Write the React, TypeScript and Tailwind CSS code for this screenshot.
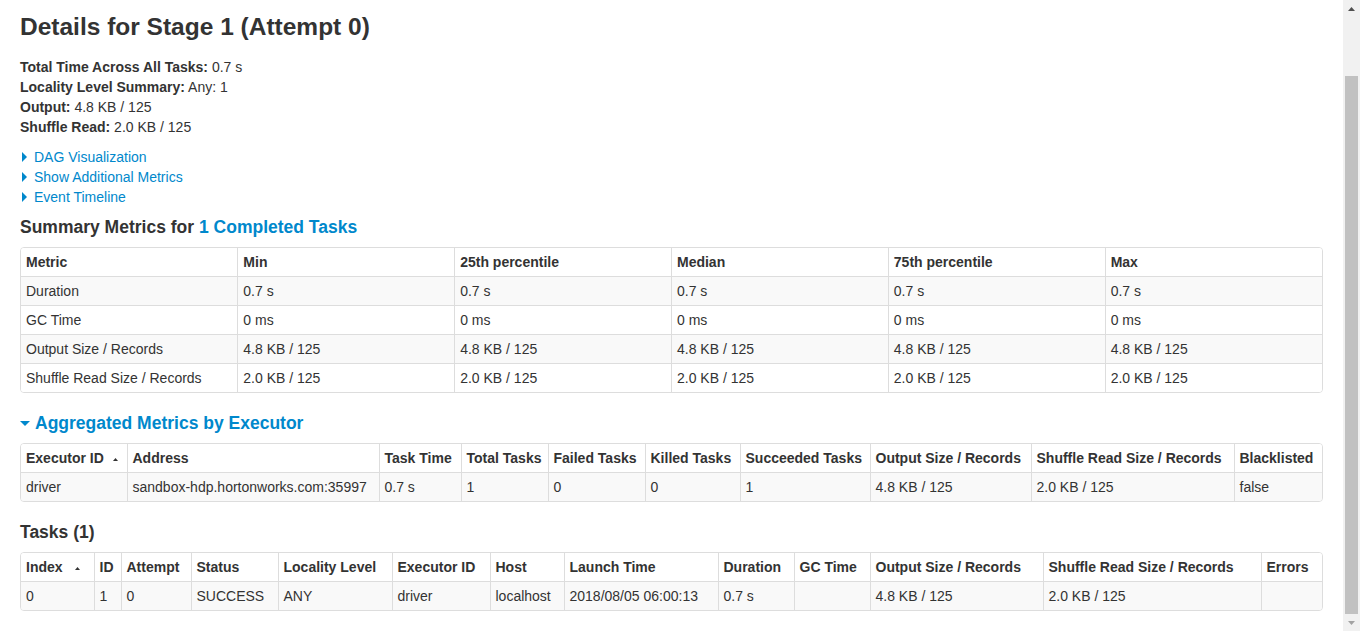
import clsx from "clsx";

type Cell = string;

interface TableProps {
    headers: string[];
    rows: Cell[][];
    widths?: (string | undefined)[];
    sortCol?: number;
    sortGap?: string;
}

const SortArrow: React.FC<{ gap: string }> = ({ gap }) => (
    <svg
        className={clsx("inline-block align-middle", gap)}
        width="5"
        height="3"
        viewBox="0 0 5 3"
    >
        <polygon points="2.5,0 5,3 0,3" fill="#333" />
    </svg>
);

const DataTable: React.FC<TableProps> = ({
    headers,
    rows,
    widths,
    sortCol,
    sortGap = "ml-[9px]",
}) => {
    return (
        <div className="mb-5 overflow-hidden rounded-[4px] border border-[#ddd]">
            <table className="w-full table-fixed border-collapse text-left">
                {widths && (
                    <colgroup>
                        {widths.map((w, i) => (
                            <col key={i} className={w} />
                        ))}
                    </colgroup>
                )}
                <thead>
                    <tr className="bg-white">
                        {headers.map((h, i) => (
                            <th
                                key={h}
                                className={clsx(
                                    "whitespace-nowrap px-[5px] py-1 font-bold",
                                    i > 0 && "border-l border-[#ddd]"
                                )}
                            >
                                {h}
                                {sortCol === i && <SortArrow gap={sortGap} />}
                            </th>
                        ))}
                    </tr>
                </thead>
                <tbody>
                    {rows.map((row, r) => (
                        <tr
                            key={r}
                            className={r % 2 === 0 ? "bg-[#f9f9f9]" : "bg-white"}
                        >
                            {row.map((c, i) => (
                                <td
                                    key={i}
                                    className={clsx(
                                        "whitespace-nowrap border-t border-[#ddd] px-[5px] py-1",
                                        i > 0 && "border-l"
                                    )}
                                >
                                    {c}
                                </td>
                            ))}
                        </tr>
                    ))}
                </tbody>
            </table>
        </div>
    );
};

const ClosedArrow: React.FC = () => (
    <span className="ml-[2px] mr-[7px] inline-block h-0 w-0 border-y-[5px] border-l-[5px] border-y-transparent border-l-[#0088cc]" />
);

const FakeScrollbar: React.FC = () => (
    <div className="flex w-[17px] shrink-0 flex-col bg-[#f1f1f1]">
        <div className="flex h-[17px] items-center justify-center">
            <svg width="7" height="4" viewBox="0 0 7 4">
                <polygon points="3.5,0 7,4 0,4" fill="#505050" />
            </svg>
        </div>
        <div className="h-[59px]" />
        <div className="mx-[2px] flex-1 bg-[#c1c1c1]" />
        <div className="flex h-[17px] items-center justify-center">
            <svg width="7" height="4" viewBox="0 0 7 4">
                <polygon points="0,0 7,0 3.5,4" fill="#a3a3a3" />
            </svg>
        </div>
    </div>
);

const summaryRows = [
    ["Duration", "0.7 s", "0.7 s", "0.7 s", "0.7 s", "0.7 s"],
    ["GC Time", "0 ms", "0 ms", "0 ms", "0 ms", "0 ms"],
    [
        "Output Size / Records",
        "4.8 KB / 125",
        "4.8 KB / 125",
        "4.8 KB / 125",
        "4.8 KB / 125",
        "4.8 KB / 125",
    ],
    [
        "Shuffle Read Size / Records",
        "2.0 KB / 125",
        "2.0 KB / 125",
        "2.0 KB / 125",
        "2.0 KB / 125",
        "2.0 KB / 125",
    ],
];

const App: React.FC = () => {
    return (
        <div className="flex h-[631px] w-full overflow-hidden bg-white font-['Liberation_Sans',Arial,sans-serif] text-[14px] leading-5 text-[#333]">
            <main className="min-w-0 flex-1 px-5 pt-[7px]">
                <h3 className="my-0 text-[24.5px] font-bold leading-10">
                    Details for Stage 1 (Attempt 0)
                </h3>
                <ul className="mt-[10px]">
                    <li>
                        <strong>Total Time Across All Tasks:</strong> 0.7 s
                    </li>
                    <li>
                        <strong>Locality Level Summary:</strong> Any: 1
                    </li>
                    <li>
                        <strong>Output:</strong> 4.8 KB / 125
                    </li>
                    <li>
                        <strong>Shuffle Read:</strong> 2.0 KB / 125
                    </li>
                </ul>

                <div className="mt-[10px] text-[#0088cc]">
                    {["DAG Visualization", "Show Additional Metrics", "Event Timeline"].map(
                        (t) => (
                            <div key={t} className="flex items-center">
                                <ClosedArrow />
                                <a href="#">{t}</a>
                            </div>
                        )
                    )}
                </div>

                <h4 className="my-[10px] text-[17.5px] font-bold leading-5">
                    Summary Metrics for{" "}
                    <a href="#" className="text-[#0088cc]">
                        1 Completed Tasks
                    </a>
                </h4>
                <DataTable
                    headers={["Metric", "Min", "25th percentile", "Median", "75th percentile", "Max"]}
                    rows={summaryRows}
                />

                <h4 className="my-[10px] flex items-center text-[17.5px] font-bold leading-5 text-[#0088cc]">
                    <span className="mr-[5px] inline-block h-0 w-0 border-x-[5px] border-t-[5px] border-x-transparent border-t-[#0088cc]" />
                    <a href="#">Aggregated Metrics by Executor</a>
                </h4>
                <DataTable
                    headers={[
                        "Executor ID",
                        "Address",
                        "Task Time",
                        "Total Tasks",
                        "Failed Tasks",
                        "Killed Tasks",
                        "Succeeded Tasks",
                        "Output Size / Records",
                        "Shuffle Read Size / Records",
                        "Blacklisted",
                    ]}
                    widths={[
                        "w-[106px]",
                        "w-[252px]",
                        "w-[82px]",
                        "w-[87px]",
                        "w-[97px]",
                        "w-[95px]",
                        "w-[130px]",
                        "w-[161px]",
                        "w-[203px]",
                        undefined,
                    ]}
                    sortCol={0}
                    sortGap="ml-[9px]"
                    rows={[
                        [
                            "driver",
                            "sandbox-hdp.hortonworks.com:35997",
                            "0.7 s",
                            "1",
                            "0",
                            "0",
                            "1",
                            "4.8 KB / 125",
                            "2.0 KB / 125",
                            "false",
                        ],
                    ]}
                />

                <h4 className="my-[10px] text-[17.5px] font-bold leading-5">Tasks (1)</h4>
                <DataTable
                    headers={[
                        "Index",
                        "ID",
                        "Attempt",
                        "Status",
                        "Locality Level",
                        "Executor ID",
                        "Host",
                        "Launch Time",
                        "Duration",
                        "GC Time",
                        "Output Size / Records",
                        "Shuffle Read Size / Records",
                        "Errors",
                    ]}
                    widths={[
                        "w-[73px]",
                        "w-[27px]",
                        "w-[70px]",
                        "w-[87px]",
                        "w-[114px]",
                        "w-[98px]",
                        "w-[74px]",
                        "w-[154px]",
                        "w-[76px]",
                        "w-[76px]",
                        "w-[173px]",
                        "w-[218px]",
                        undefined,
                    ]}
                    sortCol={0}
                    sortGap="ml-[12px]"
                    rows={[
                        [
                            "0",
                            "1",
                            "0",
                            "SUCCESS",
                            "ANY",
                            "driver",
                            "localhost",
                            "2018/08/05 06:00:13",
                            "0.7 s",
                            "",
                            "4.8 KB / 125",
                            "2.0 KB / 125",
                            "",
                        ],
                    ]}
                />
            </main>
            <FakeScrollbar />
        </div>
    );
};

export default App;
